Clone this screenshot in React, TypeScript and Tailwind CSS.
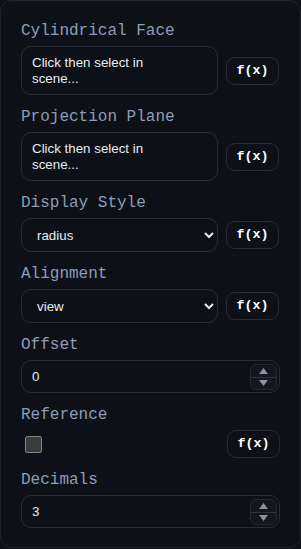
import React from "react";

const labelCls = "block font-['Liberation_Mono',monospace] text-[16px] leading-6 text-[#8d9db5] mb-[3px]";
const boxCls = "rounded-[10px] border border-[#262c36] bg-[#0d1117] text-[#e6edf3] font-['Liberation_Sans',Arial,sans-serif] text-[13.33px]";

function FxButton() {
    return (
        <button className="shrink-0 w-[53px] h-[28px] rounded-[9px] border border-[#262c36] bg-[#0d1117] text-white font-['Liberation_Mono',monospace] font-bold text-[13.33px] leading-none">
            f(x)
        </button>
    );
}

function PickField({ label }: { label: string }) {
    return (
        <div>
            <label className={labelCls}>{label}</label>
            <div className="flex items-center gap-2">
                <div className={`${boxCls} w-[197px] h-[49px] pl-[10px] pr-[40px] flex items-center leading-4`}>
                    Click then select in scene...
                </div>
                <FxButton />
            </div>
        </div>
    );
}

function SelectField({ label, value }: { label: string; value: string }) {
    return (
        <div>
            <label className={labelCls}>{label}</label>
            <div className="flex items-center gap-2">
                <select defaultValue={value} className={`${boxCls} w-[197px] h-[34px] pl-[11px] pr-[4px] [color-scheme:dark]`}>
                    <option value={value}>{value}</option>
                </select>
                <FxButton />
            </div>
        </div>
    );
}

function NumberField({ label, value }: { label: string; value: number }) {
    return (
        <div>
            <label className={labelCls}>{label}</label>
            <div className="relative">
                <input
                    type="number"
                    defaultValue={value}
                    className={`${boxCls} w-full h-[33px] pl-[10px] pr-[36px] [appearance:textfield] [&::-webkit-inner-spin-button]:appearance-none`}
                />
                {/* spin buttons */}
                <div className="absolute right-[3px] top-[4px] w-[27px] h-[26px] rounded-[6px] border border-[#232933] bg-[#111620] flex flex-col">
                    <div className="flex-1 flex items-center justify-center">
                        <svg width="9" height="6" viewBox="0 0 9 6"><path d="M4.5 0L9 6H0z" fill="#8b93a1" /></svg>
                    </div>
                    <div className="h-px bg-[#2c323c]" />
                    <div className="flex-1 flex items-center justify-center">
                        <svg width="9" height="6" viewBox="0 0 9 6"><path d="M0 0h9L4.5 6z" fill="#8b93a1" /></svg>
                    </div>
                </div>
            </div>
        </div>
    );
}

export default function App() {
    return (
        <div className="w-[301px] min-h-[549px] bg-[#0d1117]">
            <div className="rounded-xl border border-[#1f252e] bg-[#0d1117] px-5 pt-[18px] pb-[19px] flex flex-col gap-[10px] [color-scheme:dark]">
                <PickField label="Cylindrical Face" />
                <PickField label="Projection Plane" />
                <SelectField label="Display Style" value="radius" />
                <SelectField label="Alignment" value="view" />
                <NumberField label="Offset" value={0} />
                <div>
                    <label className={labelCls}>Reference</label>
                    <div className="flex items-center justify-between">
                        <input type="checkbox" className="ml-1 w-[17px] h-[17px] [color-scheme:dark]" />
                        <FxButton />
                    </div>
                </div>
                <NumberField label="Decimals" value={3} />
            </div>
        </div>
    );
}
